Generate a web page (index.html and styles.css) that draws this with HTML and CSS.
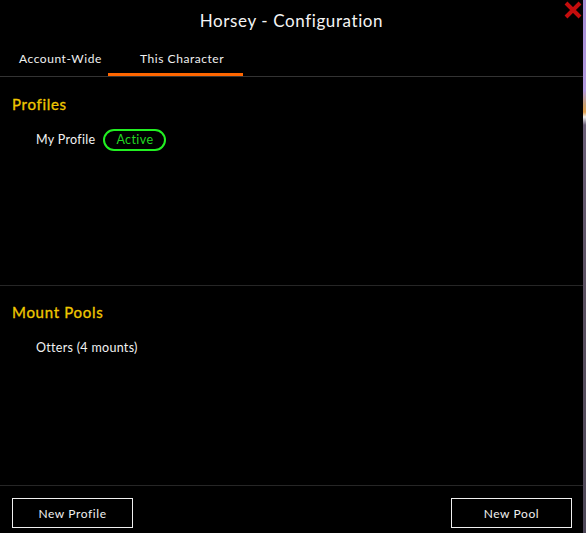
FILE: index.html
```html
<!DOCTYPE html>
<html>
<head>
<meta charset="utf-8">
<link rel="stylesheet" href="styles.css">
</head>
<body>
<div class="screen">
  <div class="panel">
    <div class="header">
      <div class="title">Horsey - Configuration</div>
      <div class="close" aria-label="Close">
        <svg width="20" height="20" viewBox="0 0 20 20"><path d="M3 3 L17 17 M17 3 L3 17" stroke="#c40d0d" stroke-width="4" stroke-linecap="butt"/></svg>
      </div>
    </div>
    <div class="tabs">
      <div class="tab tab-first">Account-Wide</div>
      <div class="tab tab-active">This Character</div>
    </div>
    <div class="section section-profiles">
      <div class="heading">Profiles</div>
      <div class="item">My Profile <span class="pill">Active</span></div>
    </div>
    <div class="section section-pools">
      <div class="heading">Mount Pools</div>
      <div class="item">Otters (4 mounts)</div>
    </div>
    <div class="footer">
      <button class="btn">New Profile</button>
      <button class="btn">New Pool</button>
    </div>
  </div>
  <div class="edge"></div>
</div>
</body>
</html>
```
FILE: styles.css
```css
html, body { margin: 0; padding: 0; background: #000; }
body { font-family: Lato, "Open Sans", sans-serif; color: #f2f2f2; }
.screen { display: flex; width: 586px; height: 533px; overflow: hidden; }
.panel { width: 583px; height: 533px; background: #000; display: flex; flex-direction: column; position: relative; }
.edge { width: 3px; height: 533px; background: linear-gradient(to bottom, #a78fd6 0px, #b49be0 90px, #c9a070 105px, #e0a050 112px, #f0f0f0 117px, #6b5f78 125px, #5a5060 300px, #4e4858 533px); }
.header { height: 40px; display: flex; justify-content: center; align-items: center; }
.title { font-size: 17px; letter-spacing: 0.6px; color: #f4f4f4; }
.close { position: absolute; right: 0; top: 0; width: 20px; height: 20px; }
.close svg { display: block; }
.tabs { display: flex; height: 37px; border-bottom: 1px solid #333; box-sizing: border-box; align-items: stretch; }
.tab { font-size: 12px; letter-spacing: 0.55px; color: #f0f0f0; display: flex; align-items: center; box-sizing: border-box; padding-top: 1px; }
.tab-first { width: 108px; padding-left: 19px; }
.tab-active { width: 135px; padding-left: 32px; border-bottom: 3px solid #ff6600; padding-top: 4px; }
.section { border-bottom: 1px solid #262626; box-sizing: border-box; padding-left: 12px; }
.section-profiles { height: 209px; padding-top: 17px; }
.section-pools { height: 200px; padding-top: 16px; }
.heading { font-size: 15px; color: #f0c800; font-weight: 400; letter-spacing: 0.7px; line-height: 20px; -webkit-text-stroke: 0.3px #f0c800; }
.item { font-size: 12.5px; letter-spacing: 0.3px; padding-left: 24px; margin-top: 15px; display: flex; align-items: center; gap: 8px; line-height: 16px; }
.section-pools .item { margin-top: 18px; }
.pill { border: 2px solid #22f022; color: #22d822; border-radius: 11px; padding: 2px 11px; line-height: 14px; font-size: 12.5px; letter-spacing: 0.4px; }
.footer { flex: 1; display: flex; justify-content: space-between; align-items: flex-start; padding: 12px 11px 0 12px; }
.btn { width: 121px; height: 30px; background: #000; border: 1px solid #f0f0f0; color: #f0f0f0; font-family: Lato, "Open Sans", sans-serif; font-size: 12px; letter-spacing: 0.6px; padding: 0; cursor: pointer; }
```
